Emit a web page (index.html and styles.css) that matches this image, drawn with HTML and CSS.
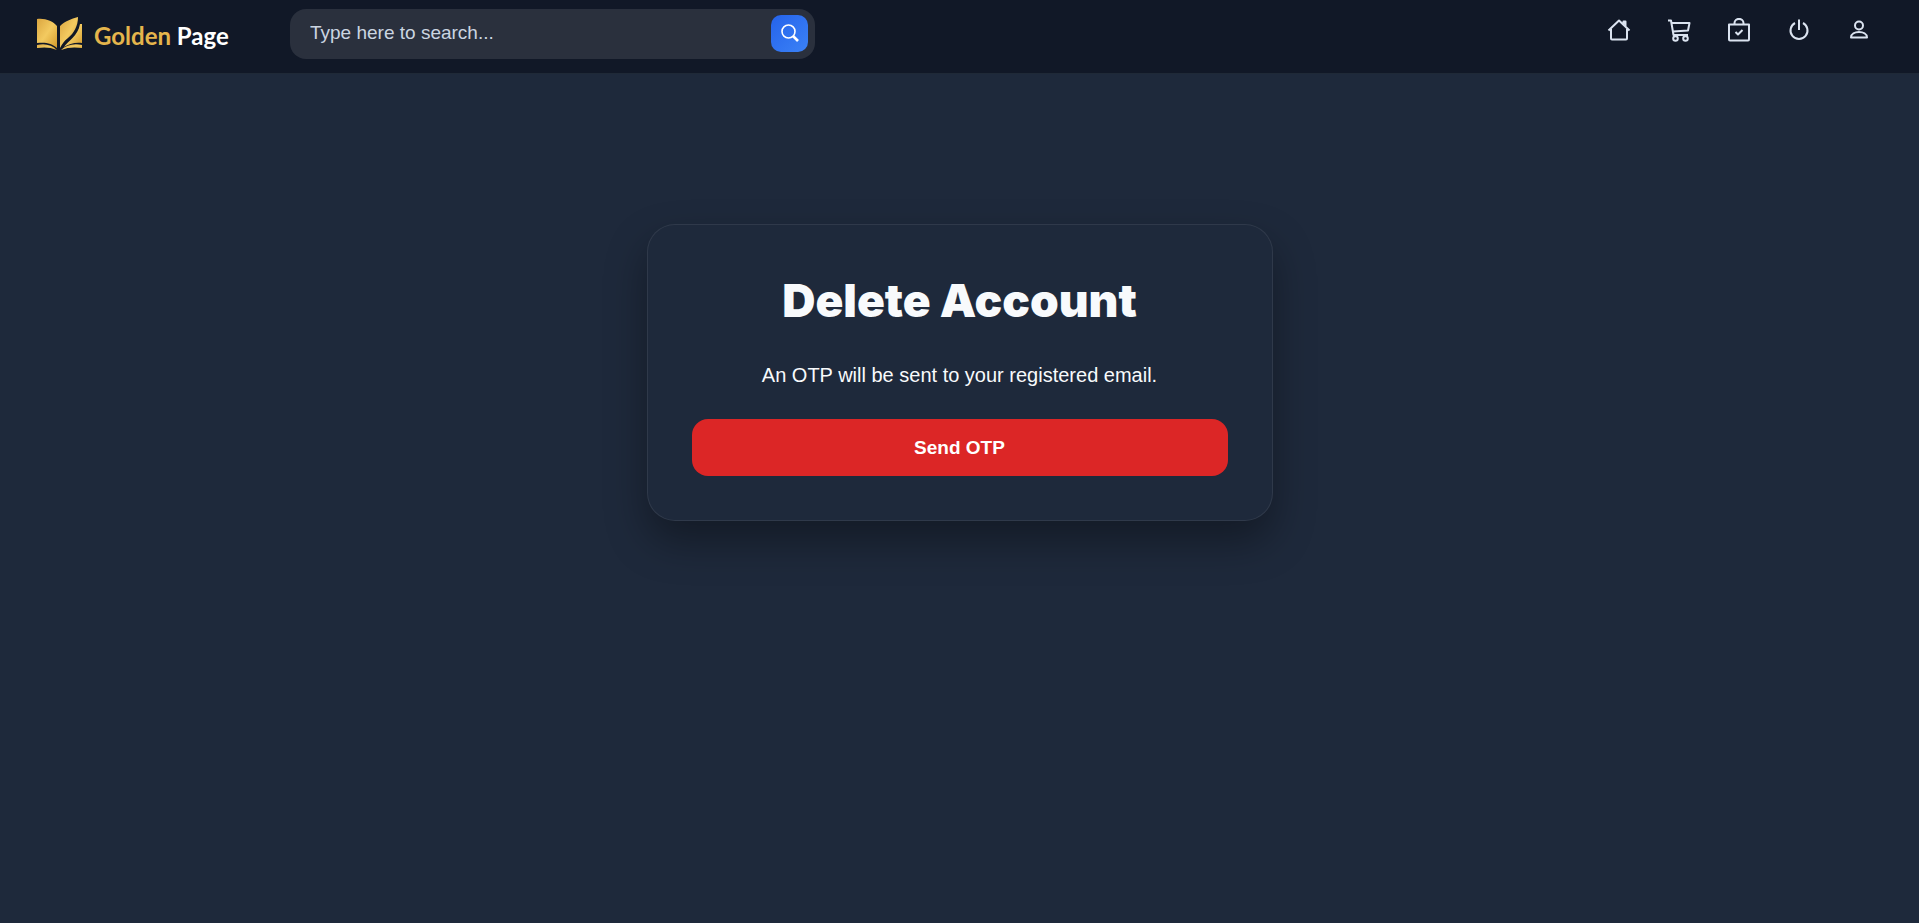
FILE: index.html
```html
<!DOCTYPE html>
<html lang="en">
<head>
  <meta charset="UTF-8">
  <meta name="viewport" content="width=device-width, initial-scale=1.0">
  <title>Delete Account</title>
  <link rel="stylesheet" href="styles.css">
</head>
<body>

  <header class="navbar">
    <a class="logo" href="#">
      <svg class="logo-mark" viewBox="0 0 48 36" aria-hidden="true">
        <defs>
          <linearGradient id="gold" x1="0" y1="0" x2="1" y2="1">
            <stop offset="0" stop-color="#dba640"/>
            <stop offset="0.5" stop-color="#f3ca60"/>
            <stop offset="1" stop-color="#d39a2c"/>
          </linearGradient>
        </defs>
        <g fill="url(#gold)">
          <path d="M1 4C9 3 17 6 21 11V33C16 28 9 27 1 28Z"/>
          <path d="M24 11C29 6 35 4 42 2C42 11 38 18 32 23C28 26 26 29 24 33Z"/>
          <path d="M46 9V28C39 27 33 29 28 32C32 26 42 21 44 9Z"/>
          <path d="M1 30C9 28 16 30 21 35C14 32 8 32 1 33Z"/>
          <path d="M46 30C38 28 30 30 25 35C32 32 39 32 46 33Z"/>
        </g>
      </svg>
      <span class="logo-text"><span class="logo-gold">Golden</span> Page</span>
    </a>

    <form class="search" role="search">
      <input type="text" class="search-input" placeholder="Type here to search..." aria-label="Search">
      <button type="button" class="search-btn" aria-label="Search">
        <svg viewBox="0 0 18 18" aria-hidden="true">
          <circle cx="7.5" cy="7.5" r="6.5" stroke-width="1.6"/>
          <path d="M12 12L17 17" stroke-width="2.6"/>
        </svg>
      </button>
    </form>

    <nav class="nav-icons">
      <a href="#" aria-label="Home">
        <svg viewBox="0 0 24 24" aria-hidden="true">
          <path d="M1.5 12.5L12 2.5L22.5 12.5M4 11V20.5Q4 21.5 5 21.5H19Q20 21.5 20 20.5V11M16.5 6V3.5H18.5V8"/>
        </svg>
      </a>
      <a href="#" aria-label="Cart">
        <svg viewBox="0 0 24 24" aria-hidden="true">
          <path d="M1 2.5H4L6.5 17H21M5 5H22.5L21 12.5L6.2 13.5"/>
          <circle cx="8.5" cy="20.5" r="2.3"/>
          <circle cx="18.5" cy="20.5" r="2.3"/>
        </svg>
      </a>
      <a href="#" aria-label="Orders">
        <svg viewBox="0 0 24 24" aria-hidden="true">
          <path d="M2 6.5H22V21.5Q22 22.5 21 22.5H3Q2 22.5 2 21.5ZM7.5 6.5V5C7.5 -0.5 16.5 -0.5 16.5 5V6.5M8.5 14L11 16.5L15.5 12"/>
        </svg>
      </a>
      <a href="#" aria-label="Log out">
        <svg viewBox="0 0 24 24" aria-hidden="true">
          <path d="M12 1.5V12M8 5A8.5 8.5 0 1 0 16 5"/>
        </svg>
      </a>
      <a href="#" aria-label="Profile">
        <svg viewBox="0 0 24 24" aria-hidden="true">
          <circle cx="12" cy="7.5" r="4"/>
          <path d="M4 19.5C4 12 20 12 20 19.5Z"/>
        </svg>
      </a>
    </nav>
  </header>

  <main class="page">
    <section class="card">
      <h1>Delete Account</h1>
      <p>An OTP will be sent to your registered email.</p>
      <button type="button" class="btn-danger">Send OTP</button>
    </section>
  </main>

</body>
</html>
```
FILE: styles.css
```css
* {
  box-sizing: border-box;
}

body {
  margin: 0;
  min-height: 100vh;
  background: #1e293b;
  color: #f8fafc;
  font-family: Arial, "Liberation Sans", sans-serif;
}

/* Navbar */
.navbar {
  display: flex;
  align-items: flex-start;
  padding: 9px 48px 14px 36px;
  background: #111827;
  border-bottom: 1px solid #1f2937;
}

.logo {
  display: flex;
  align-items: center;
  gap: 10px;
  width: 254px;
  height: 48px;
  color: #fff;
  text-decoration: none;
}

.logo-mark {
  width: 48px;
  height: 36px;
}

.logo-text {
  padding-top: 4px;
  font-family: Lato, sans-serif;
  font-size: 24px;
  font-weight: 700;
  white-space: nowrap;
}

.logo-gold {
  color: #e5b54c;
}

.search {
  display: flex;
  align-items: center;
  flex: 0 1 525px;
  height: 50px;
  padding: 0 7px 2px 20px;
  background: #2a303d;
  border-radius: 16px;
}

.search-input {
  flex: 1;
  min-width: 0;
  padding: 0;
  border: 0;
  outline: 0;
  background: none;
  color: #f8fafc;
  font-family: inherit;
  font-size: 19px;
}

.search-input::placeholder {
  color: #cbd5e1;
}

.search-btn {
  display: flex;
  align-items: center;
  justify-content: center;
  width: 37px;
  height: 37px;
  padding: 0;
  border: 0;
  border-radius: 10px;
  background: linear-gradient(135deg, #2563eb, #3b82f6);
  cursor: pointer;
}

.search-btn svg {
  width: 18px;
  height: 18px;
  fill: none;
  stroke: #fff;
}

.nav-icons {
  display: flex;
  gap: 36px;
  margin-left: auto;
  padding-top: 9px;
}

.nav-icons svg {
  display: block;
  width: 24px;
  height: 24px;
  fill: none;
  stroke: #dbe3f0;
  stroke-width: 2;
  stroke-linejoin: round;
}

/* Delete account card */
.page {
  display: flex;
  justify-content: center;
  padding: 150px 20px 40px;
}

.card {
  width: 100%;
  max-width: 626px;
  padding: 44px;
  border: 1px solid rgba(255, 255, 255, 0.08);
  border-radius: 28px;
  box-shadow: 0 20px 40px rgba(0, 0, 0, 0.35);
  background: #1e293b;
  text-align: center;
}

.card h1 {
  margin: 0 0 32px;
  font-family: "Arial Black", Inter, sans-serif;
  font-size: 46px;
  font-weight: 900;
  line-height: 62px;
}

.card p {
  margin: 0 0 32px;
  font-size: 20px;
  line-height: 24px;
}

.btn-danger {
  width: 100%;
  height: 57px;
  border: 0;
  border-radius: 16px;
  background: #dc2626;
  color: #fff;
  font-family: inherit;
  font-size: 19px;
  font-weight: 700;
  cursor: pointer;
}
```
